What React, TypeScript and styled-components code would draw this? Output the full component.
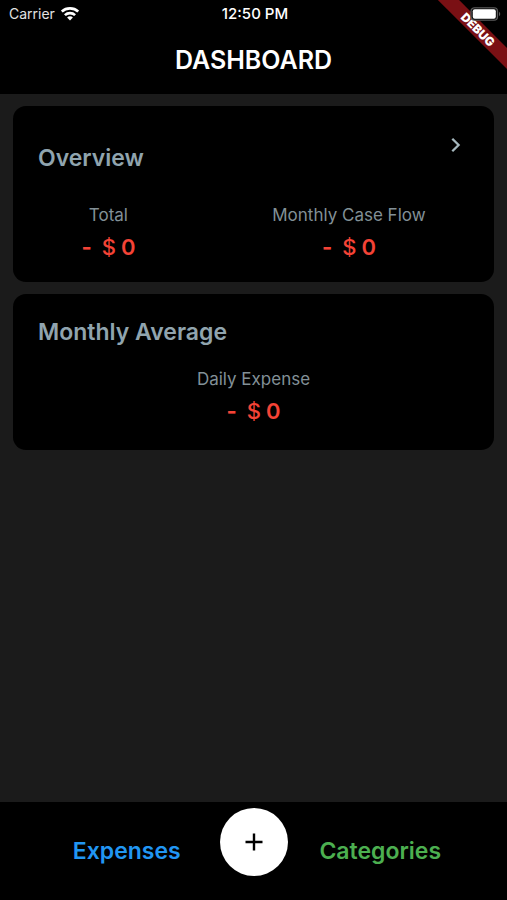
import React from "react";
import styled, { createGlobalStyle } from "styled-components";

const GlobalStyle = createGlobalStyle`
  *, *::before, *::after { box-sizing: border-box; }
  body {
    margin: 0;
    background: #1b1b1b;
    font-family: Inter, Roboto, "Liberation Sans", sans-serif;
  }
  button { font-family: inherit; border: 0; padding: 0; cursor: pointer; }
`;

const Screen = styled.div`
  position: relative;
  display: flex;
  flex-direction: column;
  min-height: 100vh;
  overflow: hidden;
  background: #1b1b1b;
`;

const Header = styled.header`
  background: #000;
  color: #fff;
`;

const StatusBar = styled.div`
  display: grid;
  grid-template-columns: 1fr auto 1fr;
  align-items: center;
  height: 27px;
  padding: 0 6px 0 9px;
  font-size: 14px;
  line-height: 20px;
`;

const Carrier = styled.div`
  display: flex;
  align-items: center;
  gap: 6px;
  color: #e2e2e2;
`;

const Clock = styled.time`
  font-size: 15px;
  font-weight: 500;
`;

const BatterySlot = styled.div`
  position: relative;
  z-index: 2;
  display: flex;
  justify-content: flex-end;
`;

const Title = styled.h1`
  margin: 0;
  padding: 17px 0 18px;
  font-size: 25px;
  line-height: 32px;
  font-weight: 600;
  text-align: center;
`;

const Ribbon = styled.div`
  position: absolute;
  z-index: 1;
  top: 22px;
  right: -41px;
  width: 140px;
  transform: rotate(45deg);
  background: #7a1014;
  color: #fff;
  font-size: 12px;
  line-height: 15px;
  font-weight: 900;
  text-align: center;
`;

const Content = styled.main`
  flex: 1;
  display: flex;
  flex-direction: column;
  gap: 12px;
  padding: 12px 13px;
`;

const Card = styled.section<{ $bottom: number }>`
  padding: 24px 0 ${(p) => p.$bottom}px;
  border-radius: 13px;
  background: #000;
`;

const CardHeader = styled.div<{ $tall?: boolean }>`
  display: flex;
  justify-content: space-between;
  padding: 0 24px 0 25px;
  margin-bottom: ${(p) => (p.$tall ? 31 : 21)}px;
`;

const CardTitle = styled.h2<{ $low?: boolean }>`
  margin: 0;
  padding-top: ${(p) => (p.$low ? 14 : 0)}px;
  color: #90a4ae;
  font-size: 23px;
  line-height: 28px;
  font-weight: 600;
`;

const OpenButton = styled.button`
  display: flex;
  width: 28px;
  height: 30px;
  align-items: center;
  justify-content: center;
  background: transparent;
  color: #a5b7bd;
`;

const Stats = styled.dl`
  display: flex;
  justify-content: space-around;
  margin: 0;
`;

const Stat = styled.div`
  display: flex;
  flex-direction: column;
  align-items: center;
  gap: 6px;
`;

const StatLabel = styled.dt`
  color: #829097;
  font-size: 17px;
  line-height: 24px;
`;

const Amount = styled.dd`
  display: flex;
  gap: 5px;
  margin: 0;
  color: #f44336;
  font-size: 22px;
  line-height: 28px;
  font-weight: 600;
`;

const Sign = styled.span`
  padding-right: 5px;
  font-weight: 700;
`;

const Currency = styled.span`
  font-weight: 500;
`;

const BottomBar = styled.nav`
  position: relative;
  display: grid;
  grid-template-columns: 1fr 1fr;
  align-items: center;
  justify-items: center;
  height: 98px;
  background: #000;
`;

const TabLink = styled.a<{ $color: string }>`
  color: ${(p) => p.$color};
  font-size: 23px;
  line-height: 28px;
  font-weight: 600;
  text-decoration: none;
`;

const AddButton = styled.button`
  position: absolute;
  top: 6px;
  left: 50%;
  display: flex;
  width: 68px;
  height: 68px;
  align-items: center;
  justify-content: center;
  transform: translateX(-50%);
  border-radius: 50%;
  background: #fff;
  color: #000;
`;

function WifiIcon() {
  return (
    <svg width="18" height="14" viewBox="0 0 18 14" fill="none" stroke="#fff" strokeWidth="2.6" aria-hidden="true">
      <path d="M.8 4.6C5.2.3 12.8.3 17.2 4.6" />
      <path d="M3.9 8.1c2.8-2.7 7.4-2.7 10.2 0" />
      <path d="M6.1 10.4c1.6-1.5 4.2-1.5 5.8 0L9 13.5z" fill="#fff" stroke="none" />
    </svg>
  );
}

function BatteryIcon() {
  return (
    <svg width="31" height="14" viewBox="0 0 31 14" aria-hidden="true">
      <rect x="1" y="0.75" width="26.5" height="12.5" rx="3.5" fill="#111" stroke="#5b5b5b" strokeWidth="1.2" />
      <rect x="2.8" y="2.3" width="23" height="9.4" rx="2" fill="#fff" />
      <path d="M29 4.8c1.7.7 1.7 3.7 0 4.4z" fill="#5b5b5b" />
    </svg>
  );
}

function ChevronIcon() {
  return (
    <svg width="10" height="16" viewBox="0 0 10 16" fill="none" stroke="currentColor" strokeWidth="2.3" aria-hidden="true">
      <path d="M1.3 1.7 7.6 8l-6.3 6.3" />
    </svg>
  );
}

function PlusIcon() {
  return (
    <svg width="18" height="18" viewBox="0 0 18 18" stroke="currentColor" strokeWidth="2.4" aria-hidden="true">
      <path d="M9 .5v17M.5 9h17" />
    </svg>
  );
}

function MoneyStat({ label, value }: { label: string; value: number }) {
  return (
    <Stat>
      <StatLabel>{label}</StatLabel>
      <Amount>
        <Sign>-</Sign>
        <Currency>$</Currency>
        <span>{value}</span>
      </Amount>
    </Stat>
  );
}

export default function App() {
  return (
    <>
      <GlobalStyle />
      <Screen>
        <Header>
          <StatusBar>
            <Carrier>
              Carrier
              <WifiIcon />
            </Carrier>
            <Clock>12:50 PM</Clock>
            <BatterySlot>
              <BatteryIcon />
            </BatterySlot>
          </StatusBar>
          <Title>DASHBOARD</Title>
        </Header>
        <Ribbon>DEBUG</Ribbon>
        <Content>
          <Card $bottom={21}>
            <CardHeader $tall>
              <CardTitle $low>Overview</CardTitle>
              <OpenButton aria-label="Open overview">
                <ChevronIcon />
              </OpenButton>
            </CardHeader>
            <Stats>
              <MoneyStat label="Total" value={0} />
              <MoneyStat label="Monthly Case Flow" value={0} />
            </Stats>
          </Card>
          <Card $bottom={25}>
            <CardHeader>
              <CardTitle>Monthly Average</CardTitle>
            </CardHeader>
            <Stats>
              <MoneyStat label="Daily Expense" value={0} />
            </Stats>
          </Card>
        </Content>
        <BottomBar>
          <TabLink href="#expenses" $color="#2196f3">Expenses</TabLink>
          <TabLink href="#categories" $color="#4caf50">Categories</TabLink>
          <AddButton aria-label="Add">
            <PlusIcon />
          </AddButton>
        </BottomBar>
      </Screen>
    </>
  );
}
